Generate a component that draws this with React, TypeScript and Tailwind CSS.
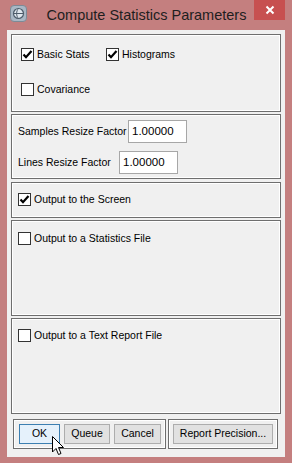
import React from 'react';

// Compute Statistics Parameters dialog (Windows 8 style frame)

function CheckBox({ checked }: { checked?: boolean }) {
  return (
    <span className="w-[13px] h-[13px] shrink-0 border border-[#333333] bg-white flex items-center justify-center">
      {checked && (
        <svg width="11" height="11" viewBox="0 0 11 11">
          <path d="M1.5 5.5 L4 8.2 L9.5 2" fill="none" stroke="#000" strokeWidth="2.2" />
        </svg>
      )}
    </span>
  );
}

function Check({ label, checked, className = '' }: { label: string; checked?: boolean; className?: string }) {
  return (
    <label className={`flex items-center gap-[3px] h-[13px] whitespace-nowrap ${className}`}>
      <CheckBox checked={checked} />
      <span className="leading-none">{label}</span>
    </label>
  );
}

function Btn({ label, w, focused }: { label: string; w: string; focused?: boolean }) {
  return (
    <div
      className={`h-[20px] ${w} shrink-0 flex items-center justify-center whitespace-nowrap border ${
        focused ? 'border-[#3c7fb1] bg-[#e5f1fb]' : 'border-[#adadad] bg-[#e1e1e1]'
      }`}
    >
      {label}
    </div>
  );
}

const panel = 'border border-[#6e6e6e] shadow-[inset_0_0_0_1px_#ffffff] bg-[#f0f0f0]';

export default function App() {
  return (
    <div
      className="relative w-[292px] h-[463px] bg-[#c47f7f] flex flex-col text-[10.5px] text-black"
      style={{ fontFamily: '"Liberation Sans", Arial, sans-serif' }}
    >
      {/* Title bar */}
      <div className="h-[30px] flex items-start shrink-0">
        <div className="mt-[5px] ml-[10px] w-[17px] h-[17px] rounded-[4px] bg-[#a9b7c4] border border-[#7d8a96] flex items-center justify-center">
          <svg width="13" height="13" viewBox="0 0 13 13">
            <circle cx="6.5" cy="6.5" r="5" fill="#dfe7ee" stroke="#4d5c6a" strokeWidth="1.2" />
            <path d="M2 6.5 H11 M6.5 1.5 C4 4 4 9 6.5 11.5" fill="none" stroke="#4d5c6a" strokeWidth="1" />
          </svg>
        </div>
        <div className="flex-1 text-center pt-[5px] pl-[12px] text-[14.5px] text-[#1e1e1e] leading-[20px] whitespace-nowrap">
          Compute Statistics Parameters
        </div>
        <div className="w-[31px] h-[20px] mr-[7px] bg-[#c75050] flex items-center justify-center">
          <svg width="10" height="10" viewBox="0 0 10 10">
            <path d="M1.5 1.5 L8.5 8.5 M8.5 1.5 L1.5 8.5" stroke="#fff" strokeWidth="2" />
          </svg>
        </div>
      </div>

      {/* Client area */}
      <div className="mx-[7px] mb-[6px] flex-1 bg-[#f0f0f0] pt-[4px] px-[4px] pb-[8px] flex flex-col gap-[2px]">
        <div className={`${panel} h-[78px] shrink-0 pl-[9px] pt-[13px]`}>
          <div className="flex">
            <Check label="Basic Stats" checked className="w-[85px]" />
            <Check label="Histograms" checked />
          </div>
          <Check label="Covariance" className="mt-[22px]" />
        </div>

        <div className={`${panel} h-[65px] shrink-0 pl-[6px] pt-[5px]`}>
          <div className="flex items-center">
            <span className="w-[110px] shrink-0 whitespace-nowrap">Samples Resize Factor</span>
            <div className="w-[59px] h-[23px] shrink-0 border border-[#a7a7a7] bg-white flex items-center pl-[3px] text-[11.5px]">
              1.00000
            </div>
          </div>
          <div className="flex items-center mt-[8px]">
            <span className="w-[101px] shrink-0 whitespace-nowrap">Lines Resize Factor</span>
            <div className="w-[59px] h-[23px] shrink-0 border border-[#a7a7a7] bg-white flex items-center pl-[3px] text-[11.5px]">
              1.00000
            </div>
          </div>
        </div>

        <div className={`${panel} h-[36px] shrink-0 pl-[6px] pt-[10px] mt-[1px]`}>
          <Check label="Output to the Screen" checked />
        </div>

        <div className={`${panel} h-[96px] shrink-0 pl-[6px] pt-[11px]`}>
          <Check label="Output to a Statistics File" />
        </div>

        <div className={`${panel} h-[96px] shrink-0 pl-[6px] pt-[10px]`}>
          <Check label="Output to a Text Report File" />
        </div>

        <div className="flex gap-[2px] mt-[3px] pl-[2px]">
          <div className={`${panel} h-[30px] w-[153px] pl-[5px] pt-[4px] flex gap-[4px]`}>
            <Btn label="OK" w="w-[41px]" focused />
            <Btn label="Queue" w="w-[46px]" />
            <Btn label="Cancel" w="w-[47px]" />
          </div>
          <div className={`${panel} h-[30px] w-[110px] pl-[4px] pt-[4px] flex`}>
            <Btn label="Report Precision..." w="w-[100px]" />
          </div>
        </div>
      </div>

      {/* Mouse cursor */}
      <svg className="absolute left-[52px] top-[436px]" width="13" height="20" viewBox="0 0 13 20">
        <path
          d="M0.5 0.5 L0.5 16 L4 12.5 L6.5 18.5 L9 17.5 L6.5 11.5 L11.5 11.5 Z"
          fill="#fff"
          stroke="#000"
          strokeWidth="1"
          strokeLinejoin="miter"
        />
      </svg>
    </div>
  );
}
